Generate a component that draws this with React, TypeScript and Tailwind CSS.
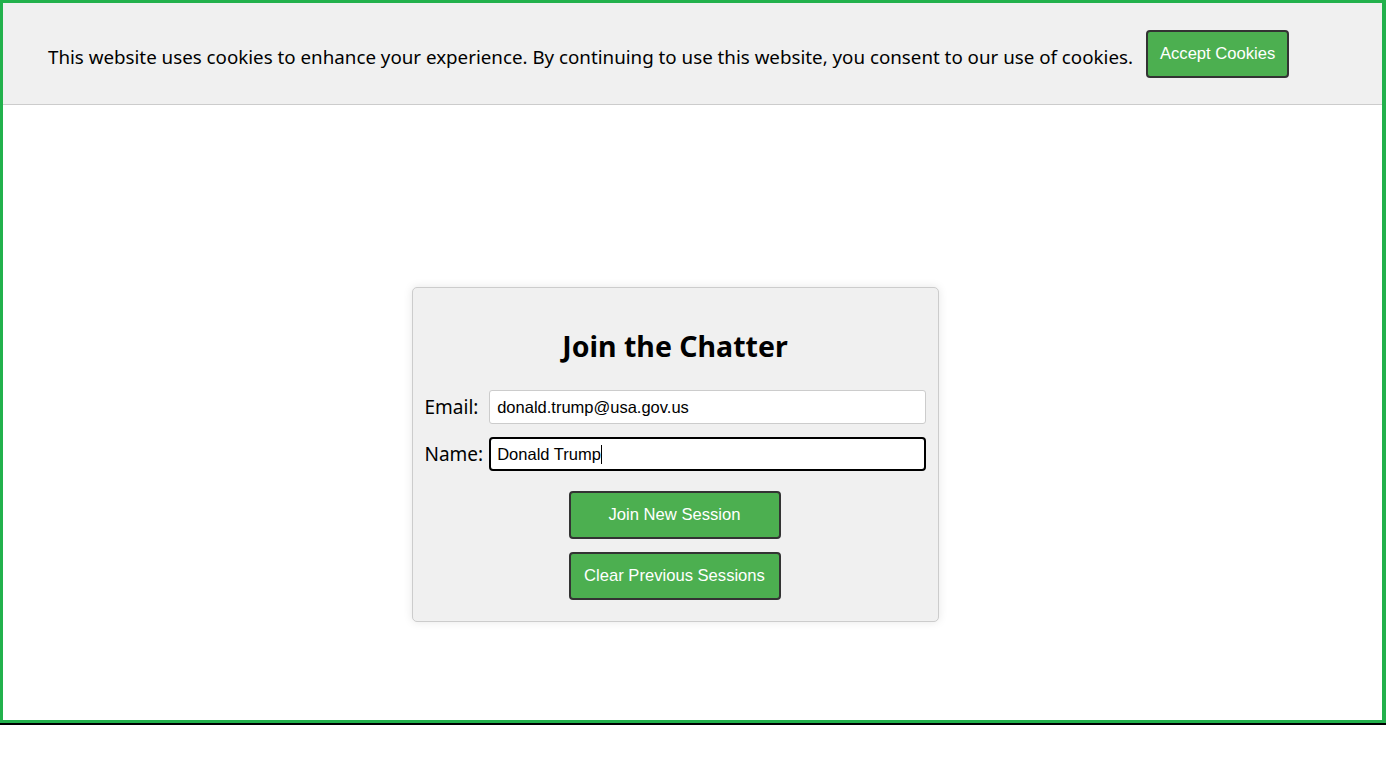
export default function App() {
  return (
    <div className="bg-white">
      <div className="flex h-[723px] flex-col border-[3px] border-r-4 border-[#22b14c] bg-white">
        <CookieBanner />
        <main className="flex flex-1 justify-center pr-[35px] pt-[182px]">
          <JoinCard />
        </main>
      </div>
      <div className="h-[2px] bg-black" />
    </div>
  );
}

function CookieBanner() {
  return (
    <div className="flex h-[102px] items-center gap-[13px] border-b border-[#cccccc] bg-[#f0f0f0] pl-[45px] pt-[1px]">
      <p className="pt-[6px] font-['Noto_Sans',sans-serif] text-[18.75px] text-black">
        This website uses cookies to enhance your experience. By continuing to use this website, you
        consent to our use of cookies.
      </p>
      <button className="h-12 rounded-[4px] border-2 border-[#333] bg-[#4caf50] px-3 font-['Liberation_Sans',Arial,sans-serif] text-[16.6px] text-white">
        Accept Cookies
      </button>
    </div>
  );
}

function JoinCard() {
  return (
    <div className="h-[335px] w-[527px] rounded-[5px] border border-[#cccccc] bg-[#f0f0f0] px-3 pt-[39px] shadow-[0_0_10px_rgba(0,0,0,0.1)]">
      <h2 className="text-center font-['Noto_Sans',sans-serif] text-[28.5px] font-bold leading-[38px] text-black">
        Join the Chatter
      </h2>
      <div className="mt-[25px] grid grid-cols-[auto_1fr] items-center gap-x-[6px] gap-y-[13px] font-['Noto_Sans',sans-serif] text-[19px] text-black">
        <label htmlFor="email">Email:</label>
        <input
          id="email"
          readOnly
          value="donald.trump@usa.gov.us"
          className="h-[34px] w-full rounded-[3px] border border-[#cccccc] bg-white px-[7px] font-['Liberation_Sans',Arial,sans-serif] text-[16.5px] text-black outline-none"
        />
        <label htmlFor="name">Name:</label>
        <div className="relative">
          <input
            id="name"
            readOnly
            value="Donald Trump"
            className="h-[34px] w-full rounded-[4px] border-2 border-black bg-white px-[6px] font-['Liberation_Sans',Arial,sans-serif] text-[16.5px] text-black outline-none"
          />
          <span className="absolute left-[112px] top-[8px] h-[19px] w-px bg-black" />
        </div>
      </div>
      <div className="mt-[20px] flex flex-col items-center gap-[13px] pr-[1px]">
        <ActionButton label="Join New Session" />
        <ActionButton label="Clear Previous Sessions" />
      </div>
    </div>
  );
}

function ActionButton({ label }: { label: string }) {
  return (
    <button className="h-12 w-[212px] rounded-[4px] border-2 border-[#333] bg-[#4caf50] font-['Liberation_Sans',Arial,sans-serif] text-[16.6px] text-white">
      {label}
    </button>
  );
}
